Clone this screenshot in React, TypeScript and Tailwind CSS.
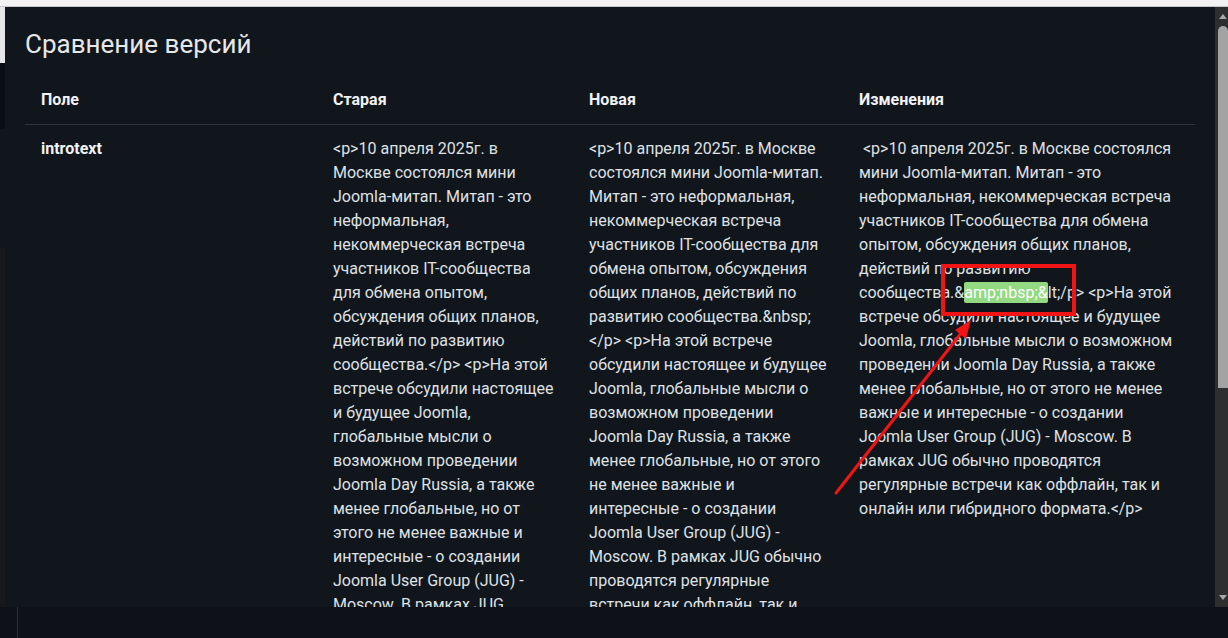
import type { ReactNode } from "react";

const oldLines = [
  "<p>10 апреля 2025г. в",
  "Москве состоялся мини",
  "Joomla-митап. Митап - это",
  "неформальная,",
  "некоммерческая встреча",
  "участников IT-сообщества",
  "для обмена опытом,",
  "обсуждения общих планов,",
  "действий по развитию",
  "сообщества.</p> <p>На этой",
  "встрече обсудили настоящее",
  "и будущее Joomla,",
  "глобальные мысли о",
  "возможном проведении",
  "Joomla Day Russia, а также",
  "менее глобальные, но от",
  "этого не менее важные и",
  "интересные - о создании",
  "Joomla User Group (JUG) -",
  "Moscow. В рамках JUG",
  "обычно проводятся",
];

const newLines = [
  "<p>10 апреля 2025г. в Москве",
  "состоялся мини Joomla-митап.",
  "Митап - это неформальная,",
  "некоммерческая встреча",
  "участников IT-сообщества для",
  "обмена опытом, обсуждения",
  "общих планов, действий по",
  "развитию сообщества.&nbsp;",
  "</p> <p>На этой встрече",
  "обсудили настоящее и будущее",
  "Joomla, глобальные мысли о",
  "возможном проведении",
  "Joomla Day Russia, а также",
  "менее глобальные, но от этого",
  "не менее важные и",
  "интересные - о создании",
  "Joomla User Group (JUG) -",
  "Moscow. В рамках JUG обычно",
  "проводятся регулярные",
  "встречи как оффлайн, так и",
  "онлайн или гибридного",
];

const diffLines: ReactNode[] = [
  " <p>10 апреля 2025г. в Москве состоялся",
  "мини Joomla-митап. Митап - это",
  "неформальная, некоммерческая встреча",
  "участников IT-сообщества для обмена",
  "опытом, обсуждения общих планов,",
  "действий по развитию",
  <>
    сообщества.&amp;
    <ins className="no-underline bg-[#93d981] text-white rounded-[2px] py-[1px]">amp;nbsp;&amp;</ins>
    lt;/p&gt; &lt;p&gt;На этой
  </>,
  "встрече обсудили настоящее и будущее",
  "Joomla, глобальные мысли о возможном",
  "проведении Joomla Day Russia, а также",
  "менее глобальные, но от этого не менее",
  "важные и интересные - о создании",
  "Joomla User Group (JUG) - Moscow. В",
  "рамках JUG обычно проводятся",
  "регулярные встречи как оффлайн, так и",
  "онлайн или гибридного формата.</p>",
];

function Lines({ lines }: { lines: ReactNode[] }) {
  return (
    <div>
      {lines.map((line, i) => (
        <div key={i} className="whitespace-pre">
          {line}
        </div>
      ))}
    </div>
  );
}

export default function App() {
  return (
    <div className="relative h-[638px] w-[1228px] overflow-hidden bg-[#16181d] font-['Roboto','Liberation_Sans',sans-serif]">
      <div className="h-[7px] bg-[#f2f2f4] border-b border-[#c6c6ca]" />

      <div className="flex h-[600px]">
        <div className="flex w-[5px] flex-col">
          <div className="h-[56px] bg-[#e6e6e8]" />
          <div className="h-[66px] bg-[#0b0e13]" />
          <div className="h-[119px] bg-[#12161c]" />
          <div className="flex-1 bg-[#16181c]" />
        </div>

        <div className="flex-1 overflow-hidden bg-[#11161d] px-5 pt-[19px]">
          <h2 className="text-[26px] leading-[36px] text-[#e6e7e9]">Сравнение версий</h2>

          <div className="mt-[14px] text-[16px] leading-6 text-[#dfe1e4]">
            <div className="grid grid-cols-[292px_256px_270px_352px] border-b border-[#30353d] font-bold text-[#f1f2f4]">
              <div className="px-4 py-3">Поле</div>
              <div className="px-4 py-3">Старая</div>
              <div className="px-4 py-3">Новая</div>
              <div className="px-4 py-3">Изменения</div>
            </div>
            <div className="grid grid-cols-[292px_256px_270px_352px]">
              <div className="px-4 py-3 font-bold text-[#f1f2f4]">introtext</div>
              <div className="px-4 py-3">
                <Lines lines={oldLines} />
              </div>
              <div className="px-4 py-3">
                <Lines lines={newLines} />
              </div>
              <div className="px-4 py-3">
                <Lines lines={diffLines} />
              </div>
            </div>
          </div>
        </div>

        <div className="flex w-[13px] flex-col bg-[#2d2e30]">
          <div className="flex h-[19px] items-center justify-end pr-[1px]">
            <div className="h-0 w-0 border-x-[4px] border-b-[5px] border-x-transparent border-b-[#a8a8a8]" />
          </div>
          <div className="ml-[3px] h-[362px] rounded-t-[5px] bg-[#a3a3a3]" />
          <div className="flex-1" />
          <div className="flex h-[19px] items-center justify-end pr-[1px]">
            <div className="h-0 w-0 border-x-[4px] border-t-[5px] border-x-transparent border-t-[#a8a8a8]" />
          </div>
        </div>
      </div>

      <div className="h-[31px] bg-[#0e1218] pl-[17px]">
        <div className="h-full w-px bg-[#2b2e33]" />
      </div>

      <svg className="pointer-events-none absolute left-0 top-0" width="1228" height="638">
        <rect x="943" y="266" width="131" height="48" fill="none" stroke="#f01414" strokeWidth="4" />
        <line x1="836" y1="493" x2="962" y2="332" stroke="#f01414" strokeWidth="3" strokeLinecap="round" />
        <polygon points="971,320 955,330 966,339" fill="#f01414" />
      </svg>
    </div>
  );
}
